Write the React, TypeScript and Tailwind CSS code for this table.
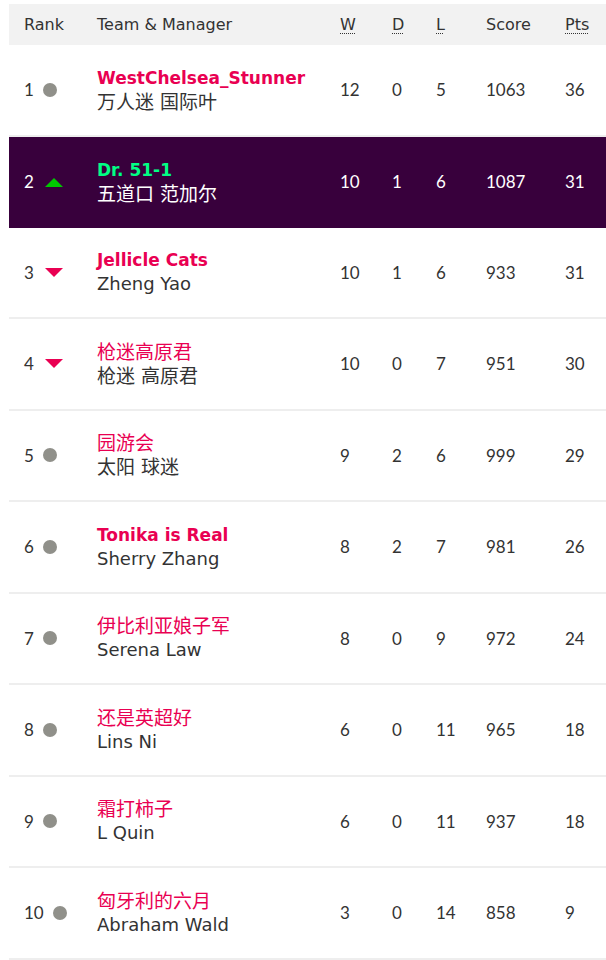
type Move = 'same' | 'up' | 'down';

type Entry = {
  rank: number;
  move: Move;
  team: string;
  manager: string;
  w: number;
  d: number;
  l: number;
  score: number;
  pts: number;
};

const entries: Entry[] = [
  { rank: 1, move: 'same', team: 'WestChelsea_Stunner', manager: '万人迷 国际叶', w: 12, d: 0, l: 5, score: 1063, pts: 36 },
  { rank: 2, move: 'up', team: 'Dr. 51-1', manager: '五道口 范加尔', w: 10, d: 1, l: 6, score: 1087, pts: 31 },
  { rank: 3, move: 'down', team: 'Jellicle Cats', manager: 'Zheng Yao', w: 10, d: 1, l: 6, score: 933, pts: 31 },
  { rank: 4, move: 'down', team: '枪迷高原君', manager: '枪迷 高原君', w: 10, d: 0, l: 7, score: 951, pts: 30 },
  { rank: 5, move: 'same', team: '园游会', manager: '太阳 球迷', w: 9, d: 2, l: 6, score: 999, pts: 29 },
  { rank: 6, move: 'same', team: 'Tonika is Real', manager: 'Sherry Zhang', w: 8, d: 2, l: 7, score: 981, pts: 26 },
  { rank: 7, move: 'same', team: '伊比利亚娘子军', manager: 'Serena Law', w: 8, d: 0, l: 9, score: 972, pts: 24 },
  { rank: 8, move: 'same', team: '还是英超好', manager: 'Lins Ni', w: 6, d: 0, l: 11, score: 965, pts: 18 },
  { rank: 9, move: 'same', team: '霜打柿子', manager: 'L Quin', w: 6, d: 0, l: 11, score: 937, pts: 18 },
  { rank: 10, move: 'same', team: '匈牙利的六月', manager: 'Abraham Wald', w: 3, d: 0, l: 14, score: 858, pts: 9 },
];

// CJK names render regular weight and a touch larger
const isCjk = (s: string) => /[\u4e00-\u9fff]/.test(s);

function MoveIcon({ move }: { move: Move }) {
  if (move === 'up') {
    return <span className="ml-[11px] h-0 w-0 border-x-[9px] border-b-[9px] border-x-transparent border-b-[#00c800]" />;
  }
  if (move === 'down') {
    return <span className="ml-[11px] h-0 w-0 border-x-[9px] border-t-[9px] border-x-transparent border-t-[#e90052]" />;
  }
  return <span className="ml-[9px] h-[14px] w-[14px] rounded-full bg-[#90908a]" />;
}

function Abbr({ children }: { children: string }) {
  return <span className="underline decoration-dotted decoration-1 underline-offset-[3px]">{children}</span>;
}

export default function App() {
  return (
    <div className="min-h-screen bg-white pt-[4px] pl-[9px] text-[17px] text-[#333333] font-['Lato',sans-serif]">
      <div className="flex h-[41px] items-center bg-[#f2f2f2] text-[16px] font-['DejaVu_Sans',sans-serif]">
        <div className="w-[88px] pl-[15px]">Rank</div>
        <div className="w-[243px]">Team &amp; Manager</div>
        <div className="w-[52px]"><Abbr>W</Abbr></div>
        <div className="w-[44px]"><Abbr>D</Abbr></div>
        <div className="w-[50px]"><Abbr>L</Abbr></div>
        <div className="w-[79px]">Score</div>
        <div className="flex-1"><Abbr>Pts</Abbr></div>
      </div>

      {entries.map((e) => {
        const mine = e.rank === 2;
        return (
          <div
            key={e.rank}
            className={
              mine
                ? 'flex h-[91px] items-center bg-[#38003c] text-white'
                : 'flex h-[91.5px] items-center border-b-2 border-[#eeeeee]'
            }
          >
            <div className="flex w-[88px] items-center pl-[15px]">
              <span>{e.rank}</span>
              <MoveIcon move={e.move} />
            </div>
            <div className="flex w-[243px] flex-col leading-[24px] font-['DejaVu_Sans','Noto_Sans_CJK_SC',sans-serif]">
              <span
                className={
                  (mine ? 'text-[#00ff85] ' : 'text-[#e90052] ') +
                  (isCjk(e.team) ? 'font-normal text-[19px]' : 'font-bold text-[17px]')
                }
              >
                {e.team}
              </span>
              <span className={isCjk(e.manager) ? 'text-[19px]' : 'text-[18px]'}>{e.manager}</span>
            </div>
            <div className="w-[52px]">{e.w}</div>
            <div className="w-[44px]">{e.d}</div>
            <div className="w-[50px]">{e.l}</div>
            <div className="w-[79px]">{e.score}</div>
            <div className="flex-1">{e.pts}</div>
          </div>
        );
      })}
    </div>
  );
}
